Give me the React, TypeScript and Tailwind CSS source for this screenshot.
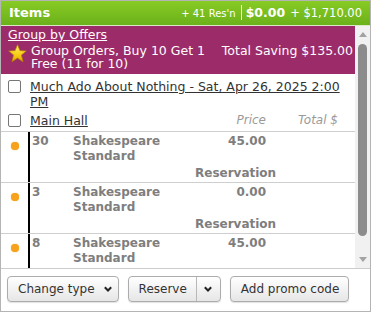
import * as React from "react";

type Line = {
  qty: string;
  name: string;
  price: string;
  note?: string;
};

const lines: Line[] = [
  { qty: "30", name: "Shakespeare Standard", price: "45.00", note: "Reservation" },
  { qty: "3", name: "Shakespeare Standard", price: "0.00", note: "Reservation" },
  { qty: "8", name: "Shakespeare Standard", price: "45.00" },
];

function Chevron() {
  return (
    <svg width="8" height="6" viewBox="0 0 8 6" className="block">
      <path d="M0.8 1.2 L4 4.5 L7.2 1.2" fill="none" stroke="#222" strokeWidth="2" />
    </svg>
  );
}

function Star() {
  return (
    <svg width="19" height="19" viewBox="0 0 20 20" className="block shrink-0">
      <defs>
        <linearGradient id="starFill" x1="0" y1="0" x2="0" y2="1">
          <stop offset="0" stopColor="#fff176" />
          <stop offset="0.55" stopColor="#f7cf1a" />
          <stop offset="1" stopColor="#e6a800" />
        </linearGradient>
      </defs>
      <polygon
        points="10,0.8 12.6,7 19.2,7.4 14.1,11.6 15.8,18.6 10,14.8 4.2,18.6 5.9,11.6 0.8,7.4 7.4,7"
        fill="url(#starFill)"
        stroke="#b58200"
        strokeWidth="0.8"
        strokeLinejoin="round"
      />
    </svg>
  );
}

function Checkbox() {
  return (
    <span className="block h-[13px] w-[13px] shrink-0 rounded-[2px] border border-[#767676] bg-white" />
  );
}

function Button({ children }: { children: React.ReactNode }) {
  return (
    <button className="flex h-[26px] items-center rounded-[4px] border border-[#acacac] bg-gradient-to-b from-white to-[#e6e6e6] text-[12px] text-[#333] shadow-[0_1px_1px_rgba(0,0,0,0.12)]">
      {children}
    </button>
  );
}

export default function App() {
  return (
    <div className="flex h-[312px] w-[371px] flex-col border border-[#b4b4b4] bg-white font-['DejaVu_Sans',sans-serif]">
      {/* Header */}
      <div className="flex h-[24px] shrink-0 items-baseline bg-gradient-to-b from-[#88cb25] to-[#6bb11a] pl-[8px] pr-[8px] pt-[4px] leading-[16px] text-white">
        <span className="text-[13px] font-bold">Items</span>
        <span className="ml-auto text-[10px]">+ 41 Res&apos;n</span>
        <span className="ml-[5px] h-[15px] w-px self-start bg-white/90" />
        <span className="ml-[4px] text-[12.5px] font-bold">$0.00</span>
        <span className="ml-[5px] text-[11.5px]">+ $1,710.00</span>
      </div>
      <div className="h-px shrink-0 bg-[#dbe8c8]" />

      {/* Body */}
      <div className="flex h-[242px] shrink-0">
        <div className="h-full w-[354px] overflow-hidden">
          {/* Offers */}
          <div className="bg-[#9c2c69] pb-[4px] pr-[2px] pl-[7px] pt-[1px] text-[12.5px] text-white">
            <div className="leading-[15px] underline">Group by Offers</div>
            <div className="mt-[2px] flex items-start leading-[13px]">
              <Star />
              <div className="ml-[4px] flex-1 pr-[4px]">Group Orders, Buy 10 Get 1 Free (11 for 10)</div>
              <div className="shrink-0 whitespace-nowrap">Total Saving $135.00</div>
            </div>
          </div>

          {/* Event */}
          <div className="flex items-start pl-[7px] pr-[4px] pt-[5px] text-[12.5px] leading-[15px] text-[#333]">
            <div className="pt-[1px]">
              <Checkbox />
            </div>
            <a className="ml-[9px] underline">Much Ado About Nothing - Sat, Apr 26, 2025 2:00 PM</a>
          </div>

          <div className="mt-[4px] flex items-center pb-[3px] pl-[7px] pr-[17px] text-[12.5px] leading-[15px] text-[#333]">
            <Checkbox />
            <a className="ml-[9px] flex-1 underline">Main Hall</a>
            <span className="text-right text-[12px] italic text-[#9a9a9a]">Price</span>
            <span className="w-[72px] text-right text-[12px] italic text-[#9a9a9a]">Total $</span>
          </div>

          {/* Lines */}
          {lines.map((line, i) => (
            <div key={i} className="flex border-t border-[#cfcfcf] text-[12px] font-bold leading-[15px] text-[#7e7e7e]">
              <div className="flex w-[27px] justify-center pt-[10px]">
                <span className="block h-[8px] w-[8px] rounded-full bg-[#f6a21c] shadow-[0_0_1px_#f6a21c]" />
              </div>
              <div className="w-[2px] self-stretch bg-black" />
              <div className="w-[43px] pl-[2px] pt-[2px]">{line.qty}</div>
              <div className="w-[122px] pt-[2px]">
                Shakespeare
                <br />
                Standard
              </div>
              <div className="w-[82px] pb-[1px] pt-[2px]">
                <div className="pr-[11px] text-right">{line.price}</div>
                <div className="h-[15px]" />
                {line.note ? (
                  <div className="mt-[2px] whitespace-nowrap">{line.note}</div>
                ) : (
                  <div className="mt-[2px] h-[15px]" />
                )}
              </div>
            </div>
          ))}
        </div>

        {/* Scrollbar */}
        <div className="flex w-[15px] flex-col items-center bg-[#f1f1f1] pt-[6px]">
          <svg width="8" height="5" viewBox="0 0 8 5" className="block">
            <polygon points="4,0 8,5 0,5" fill="#a3a3a3" />
          </svg>
          <div className="mt-[7px] h-[192px] w-[9px] rounded-full bg-[#8c8c8c]" />
          <svg width="8" height="5" viewBox="0 0 8 5" className="mt-[21px] block">
            <polygon points="0,0 8,0 4,5" fill="#a3a3a3" />
          </svg>
        </div>
      </div>

      {/* Footer */}
      <div className="flex flex-1 gap-[9px] border-t border-[#cccccc] pl-[6px] pt-[7px]">
        <Button>
          <span className="pl-[10px]">Change type</span>
          <span className="pl-[9px] pr-[6px]">
            <Chevron />
          </span>
        </Button>
        <Button>
          <span className="pl-[10px] pr-[9px]">Reserve</span>
          <span className="h-full w-px bg-[#b8b8b8]" />
          <span className="pl-[7px] pr-[8px]">
            <Chevron />
          </span>
        </Button>
        <Button>
          <span className="pl-[10px] pr-[9px]">Add promo code</span>
        </Button>
      </div>
    </div>
  );
}
